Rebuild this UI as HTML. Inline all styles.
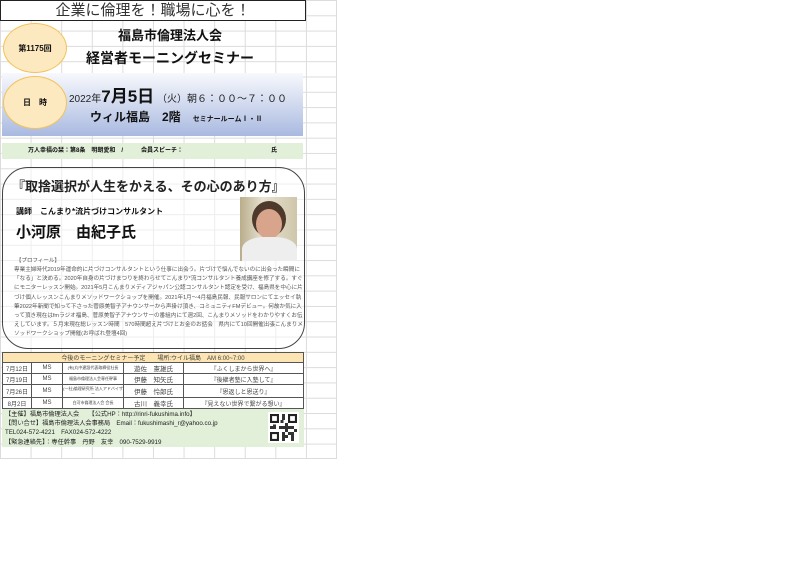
<!DOCTYPE html>
<html><head><meta charset="utf-8"><style>
*{margin:0;padding:0;box-sizing:border-box}
body{width:800px;height:566px;background:#fff;position:relative;overflow:hidden;font-family:"Liberation Sans","Noto Sans CJK JP",sans-serif;color:#111}
.grid{position:absolute;left:0;top:0;width:337px;height:459px;
background-image:linear-gradient(to right,#dcdcdc 1px,transparent 1px),linear-gradient(to bottom,#dcdcdc 1px,transparent 1px);
background-size:30.6px 100%,100% 15.3px;border-right:1px solid #dcdcdc;border-bottom:1px solid #dcdcdc}
.a{position:absolute;white-space:nowrap}
.circ{position:absolute;border-radius:50%;background:#fde9c0;border:1px solid #f2c35a;font-size:8px;font-weight:bold;display:flex;align-items:center;justify-content:center}
table{border-collapse:collapse;position:absolute;left:2px;top:352px;width:302px;font-size:6px;color:#444}
td{border:1px solid #555;text-align:center;height:11px;background:#fff}
</style></head><body>
<div class="grid"></div>
<div class="a" style="left:0;top:0;width:306px;height:21px;border:1px solid #222;background:#fff;font-size:15px;color:#333;text-align:center;line-height:20px">企業に倫理を！職場に心を！</div>
<div class="circ" style="left:3px;top:23px;width:64px;height:50px">第1175回</div>
<div class="a" style="left:55px;top:25px;width:230px;text-align:center;font-size:13px;font-weight:bold">福島市倫理法人会</div>
<div class="a" style="left:55px;top:48px;width:230px;text-align:center;font-size:14px;font-weight:bold">経営者モーニングセミナー</div>
<div class="a" style="left:2px;top:73px;width:301px;height:63px;background:linear-gradient(#f8f9fd,#a9b9e0)"></div>
<div class="circ" style="left:3px;top:76px;width:64px;height:53px">日　時</div>
<div class="a" style="left:69px;top:82px;font-size:10px;color:#222">2022年<b style="font-size:17px;color:#111">7月5日</b> （火）朝６：００～７：００</div>
<div class="a" style="left:90px;top:108px;font-size:12px;font-weight:bold">ウィル福島　2階　<span style="font-size:7px">セミナールームⅠ・Ⅱ</span></div>
<div class="a" style="left:2px;top:143px;width:301px;height:16px;background:#e2efd9;font-size:6px;font-weight:bold;line-height:16px;padding-left:26px">万人幸福の栞：第8条　明朗愛和　/　　　会員スピーチ：<span style="position:absolute;left:269px">氏</span></div>
<div class="a" style="left:2px;top:167px;width:303px;height:182px;border:1px solid #444;border-radius:26px;background:rgba(255,255,255,.5)"></div>
<div class="a" style="left:12px;top:176px;font-size:13px;font-weight:bold;color:#222">『取捨選択が人生をかえる、その心のあり方』</div>
<div class="a" style="left:16px;top:206px;font-size:8px;font-weight:bold">講師　こんまり*流片づけコンサルタント</div>
<div class="a" style="left:16px;top:221px;font-size:15px;font-weight:bold">小河原　由紀子氏</div>
<div class="a" style="left:240px;top:197px;width:57px;height:64px;overflow:hidden;background:linear-gradient(90deg,#b9ad8a,#e6e2d2 40%,#cfc6aa)">
<div style="position:absolute;left:12px;top:4px;width:34px;height:36px;border-radius:50%;background:#4e3a2c"></div>
<div style="position:absolute;left:16px;top:12px;width:26px;height:30px;border-radius:50%;background:#d8a48c"></div>
<div style="position:absolute;left:2px;top:40px;width:55px;height:30px;border-radius:40% 40% 0 0;background:#eeeeee"></div>
</div>
<div class="a" style="left:16px;top:256px;font-size:5.5px;color:#555">【プロフィール】</div>
<div class="a" style="left:14px;top:266px;width:290px;font-size:5.6px;line-height:9.2px;color:#555;white-space:normal">専業主婦時代2019年運命的に片づけコンサルタントという仕事に出会う。片づけで悩んでないのに出会った瞬間に「なる」と決める。2020年自身の片づけまつりを終わらせてこんまり*流コンサルタント養成講座を修了する。すぐにモニターレッスン開始。2021年5月こんまりメディアジャパン公認コンサルタント認定を受け、福島県を中心に片づけ個人レッスンこんまりメソッドワークショップを開催。2021年1月～4月福島民報、民報サロンにてエッセイ執筆2022年新聞で知って下さった菅原美智子アナウンサーから声掛け頂き、コミュニティFMデビュー。何故か気に入って頂き現在はfmラジオ福島、菅原美智子アナウンサーの番組内にて週2回、こんまりメソッドをわかりやすくお伝えしています。５月末現在総レッスン時間　570時間超え片づけとお金のお話会　県内にて10回開催出張こんまりメソッドワークショップ開催(お呼ばれ登壇4回)</div>
<table>
<tr><td colspan="5" style="background:#fce4b3;height:10px">今後のモーニングセミナー予定　　場所:ウイル福島　AM 6:00~7:00</td></tr>
<tr><td style="width:29px">7月12日</td><td style="width:31px">MS</td><td style="width:61px;font-size:4px">(有)丸中建設代表取締役社長</td><td style="width:60px;font-size:6.5px">遊佐　憲雄氏</td><td>『ふくしまから世界へ』</td></tr>
<tr><td>7月19日</td><td>MS</td><td style="font-size:4px">福島市倫理法人会専任幹事</td><td style="font-size:6.5px">伊藤　知矢氏</td><td>『後継者塾に入塾して』</td></tr>
<tr><td style="height:13px">7月26日</td><td>MS</td><td style="font-size:4px;line-height:5px">(一社)倫理研究所 法人アドバイザー</td><td style="font-size:6.5px">伊藤　怜郎氏</td><td>『恩返しと恩送り』</td></tr>
<tr><td>8月2日</td><td>MS</td><td style="font-size:4px">白河市倫理法人会 会長</td><td style="font-size:6.5px">古川　義幸氏</td><td>『見えない世界で繋がる想い』</td></tr>
</table>
<div class="a" style="left:2px;top:409px;width:302px;height:38px;background:#e2efd9;font-size:6.2px;line-height:9.2px;padding:1px 3px;color:#222">【主催】福島市倫理法人会　　【公式HP：http://rinri-fukushima.info】<br>【問い合せ】福島市倫理法人会事務局　Email：fukushimashi_r@yahoo.co.jp<br>TEL024-572-4221　FAX024-572-4222<br>【緊急連絡先】：専任幹事　丹野　友幸　090-7529-9919</div>
<div class="a" style="left:268px;top:412px;width:31px;height:31px;background:#fff;padding:2px">
<svg width="27" height="27" viewBox="0 0 9 9"><rect x="0" y="0" width="3" height="3" fill="#222"/><rect x="6" y="0" width="3" height="3" fill="#222"/><rect x="0" y="6" width="3" height="3" fill="#222"/><rect x="0.7" y="0.7" width="1.6" height="1.6" fill="#fff"/><rect x="6.7" y="0.7" width="1.6" height="1.6" fill="#fff"/><rect x="0.7" y="6.7" width="1.6" height="1.6" fill="#fff"/><path d="M4 0h1v2h-1zM3 4h2v1h-2zM5 3h1v3h-1zM6 4h2v1h-2zM4 6h1v3h-1zM6 6h2v1h-2zM7 7h1v2h-1zM0 4h2v1h-2zM5 7h1v1h-1zM3.5 2h1v1h-1zM1 3.5h1v.5h-1zM8 5h1v1h-1z" fill="#333"/></svg></div>
</body></html>
